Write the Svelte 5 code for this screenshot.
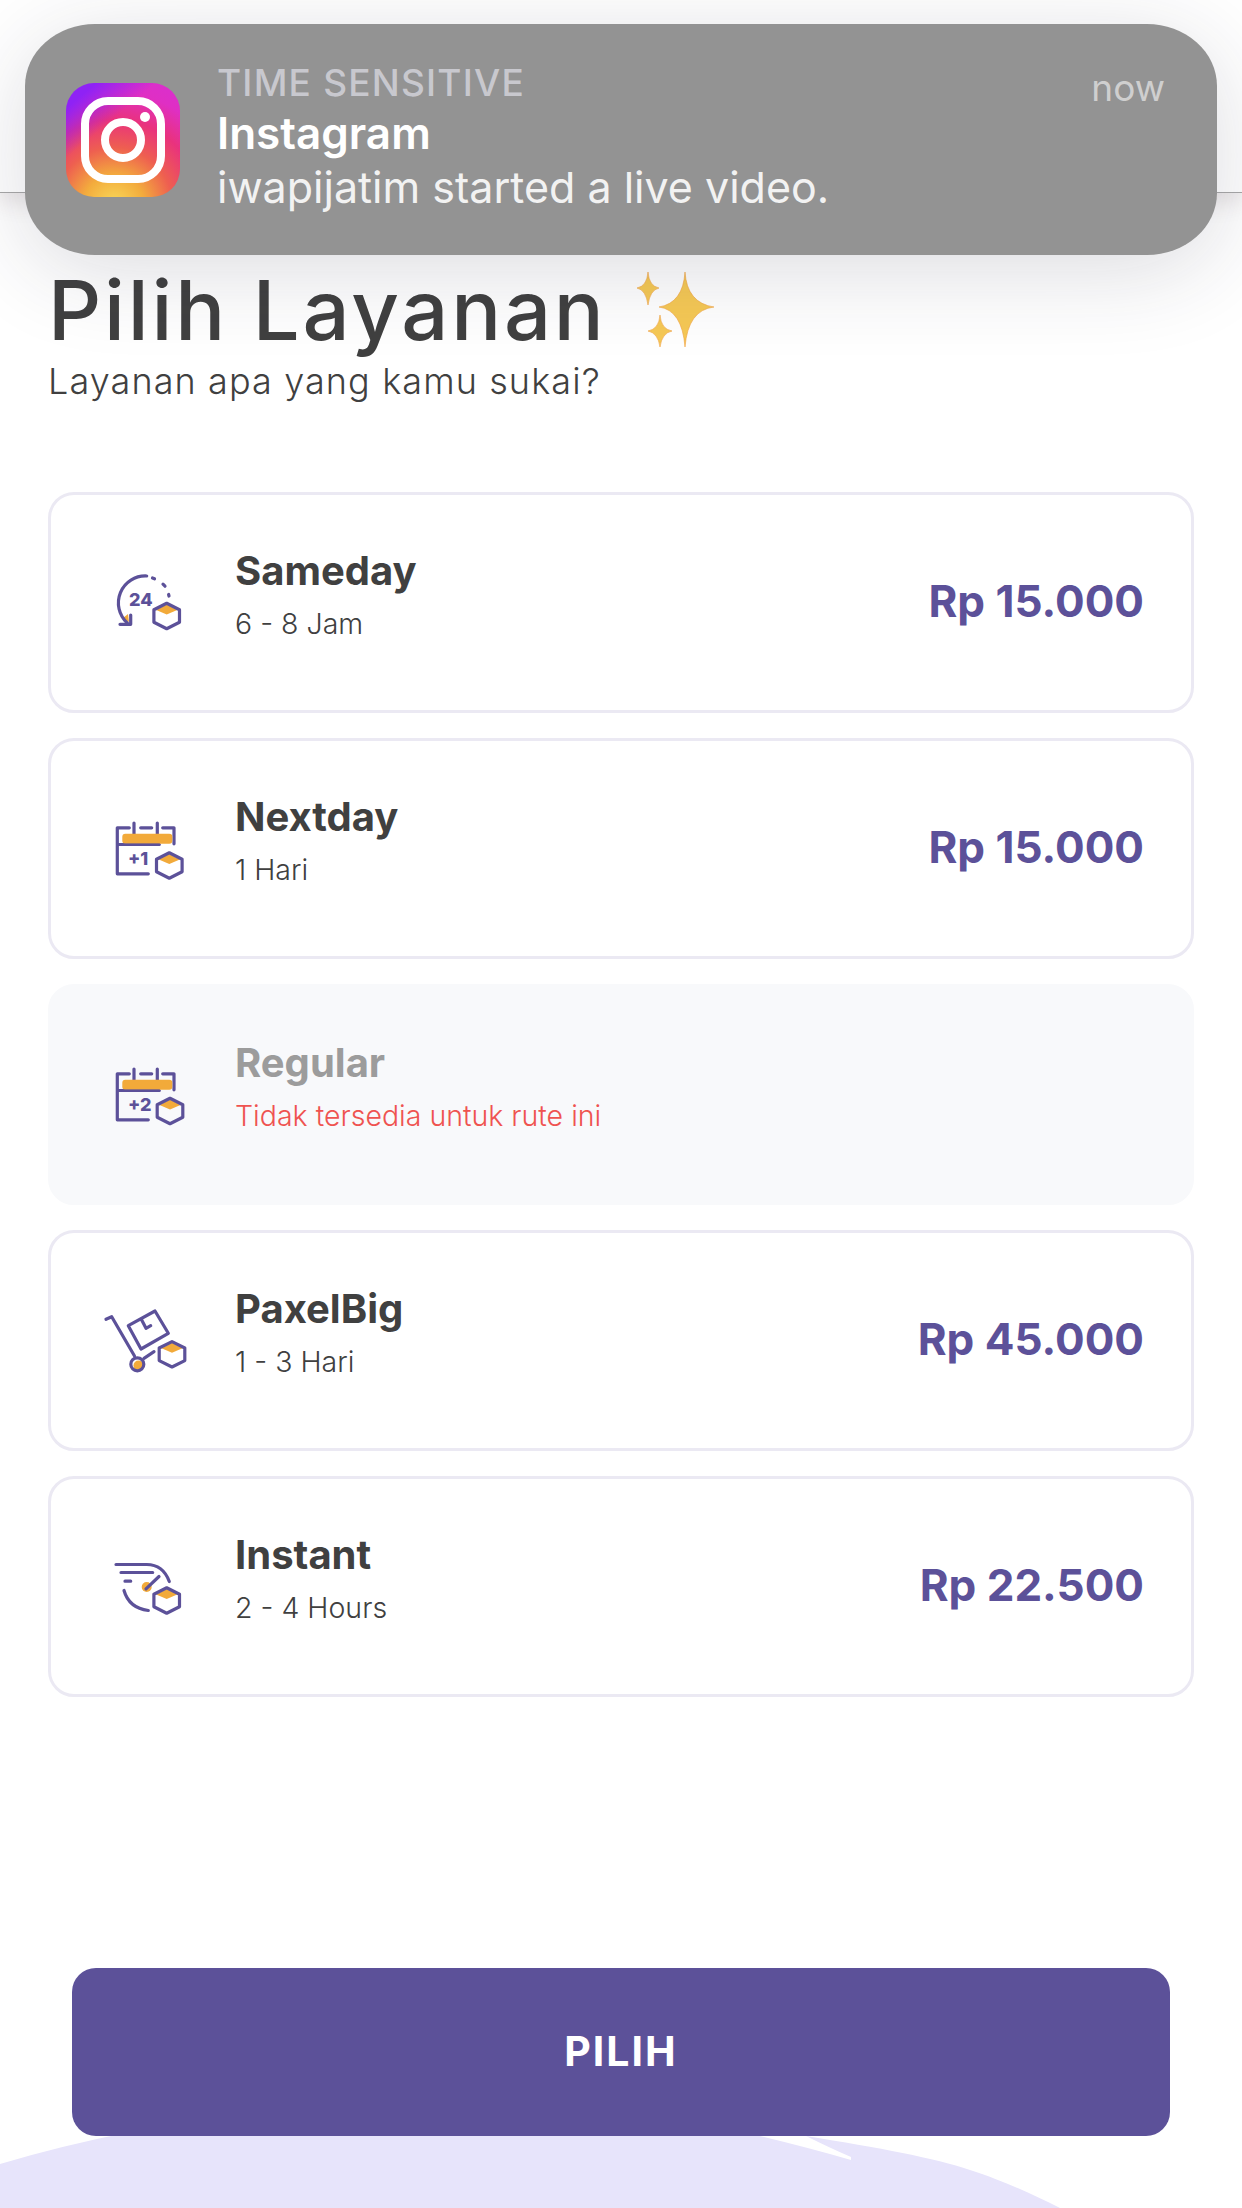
<script>
	const services = [
		{ name: 'Sameday', time: '6 - 8 Jam', price: 'Rp 15.000', icon: 'clock', box: [61.7, 58] },
		{ name: 'Nextday', time: '1 Hari', price: 'Rp 15.000', icon: 'calendar', plus: '+1', box: [64.3, 61.5] },
		{ name: 'Regular', time: 'Tidak tersedia untuk rute ini', icon: 'calendar', plus: '+2', box: [65, 61], off: true },
		{ name: 'PaxelBig', time: '1 - 3 Hari', price: 'Rp 45.000', icon: 'trolley', box: [67, 58.3] },
		{ name: 'Instant', time: '2 - 4 Hours', price: 'Rp 22.500', icon: 'speed', box: [61.7, 58.5] }
	];
	let selected = $state(null);
</script>

<div class="page">
	<svg class="blob" viewBox="0 0 1242 80" aria-hidden="true">
		<path d="M0 36 Q60 18 130 4 L760 4 L760 8 Q810 20 851 32 L851 29 Q830 20 806 8 C880 20 935 30 970 42 C1010 55 1035 68 1060 80 L0 80 Z" fill="#e7e4fb" />
	</svg>

	<div class="topbar"></div>

	<div class="notif">
		<svg class="ig" viewBox="0 0 114 114" aria-hidden="true">
			<rect x="19" y="18" width="76" height="78" rx="23" fill="none" stroke="#fff" stroke-width="8" />
			<circle cx="57" cy="57" r="18" fill="none" stroke="#fff" stroke-width="8" />
			<circle cx="79" cy="34" r="5" fill="#fff" />
		</svg>
		<div class="notif-text">
			<div class="tag">TIME SENSITIVE</div>
			<div class="app">Instagram</div>
			<div class="msg">iwapijatim started a live video.</div>
		</div>
		<div class="now">now</div>
	</div>

	<header>
		<h1>Pilih Layanan
			<svg class="sparkle" viewBox="0 0 78 76" aria-hidden="true">
				<g fill="#f6c955" stroke="#f2a23f" stroke-width="0.6">
					<path d="M48 0 Q50 31 77 35 Q51 38 48 75 Q45 38 22 35 Q46 31 48 0 Z" />
					<path d="M11 0 Q12 14 22 16 Q13 18 11 33 Q9 18 0 16 Q10 14 11 0 Z" />
					<path d="M23 43 Q24 57 35 59 Q25 61 23 75 Q21 61 11 59 Q22 57 23 43 Z" />
				</g>
			</svg>
		</h1>
		<p>Layanan apa yang kamu sukai?</p>
	</header>

	<div class="list">
		{#each services as s}
			<button class="card" class:off={s.off} class:picked={selected === s.name} disabled={s.off} onclick={() => (selected = s.name)}>
				<svg class="icon" viewBox="0 0 90 90" aria-hidden="true">
					<g fill="none" stroke="#5c5199" stroke-width="3.2" stroke-linecap="round" stroke-linejoin="round">
						{#if s.icon === 'clock'}
							<path d="M23 56 L18 60 L24 64 Z" fill="#f2aa3a" stroke="none" />
							<path d="M41.7 18 A27 27 0 0 0 22.3 65" />
							<path d="M15 66.3 H25.7 V57" />
							<path d="M47.5 20 L49.5 20.8 M58 26.2 L60 28.2 M63.6 36.5 L64 38" />
							<text x="24" y="47.5" class="num">24</text>
						{:else if s.icon === 'calendar'}
							<path d="M54.3 40.5 H12.3 V23.8 H24.3 M35.7 23.8 H46.7 M57.7 23.8 H69 V39.8 M29 19 V30 M52.3 19 V30 M12.3 40.5 V69.8 H43.3" />
							<rect x="17.3" y="29.8" width="50" height="10" rx="3" fill="#f2aa3a" stroke="none" />
							<path d="M17 40.5 H54.3" stroke-width="2" />
							<text x="23" y="60.5" class="num">{s.plus}</text>
						{:else if s.icon === 'trolley'}
							<circle cx="33.5" cy="69.5" r="5" fill="#f2aa3a" stroke="none" />
							<circle cx="32.3" cy="68.3" r="6.5" />
							<path d="M1 23.3 L6.7 20.7 L29.5 60 M39 62.3 L49 55.7" />
							<path d="M23.3 29.7 L50 15 L63.3 37.3 L36 53 Z M36.7 24 L41 32.3 L45.7 29.7" />
						{:else}
							<circle cx="41.7" cy="45" r="5" fill="#f2aa3a" stroke="none" />
							<path d="M11 22.5 H41.7 Q58 22.5 64.3 39.5 M16 30.5 H47.7 M20 39.2 H25.7 M19 48.5 Q24 66 43.3 68.5 M41 46.8 L54 34.5" />
						{/if}
					</g>
					<g transform="translate({s.box[0]} {s.box[1]})">
						<path d="M0 -11.5 L10.5 -6 L0 -1.5 L-10.5 -6 Z" fill="#f2aa3a" />
						<path d="M0 -12.7 L12.8 -6.3 V6.3 L0 12.7 L-12.8 6.3 V-6.3 Z" fill="none" stroke="#5c5199" stroke-width="3.2" stroke-linejoin="round" />
					</g>
				</svg>
				<span class="info">
					<span class="name">{s.name}</span>
					<span class="time">{s.time}</span>
				</span>
				{#if s.price}<span class="price">{s.price}</span>{/if}
			</button>
		{/each}
	</div>

	<button class="pick">PILIH</button>
</div>

<style>
	:global(body) {
		margin: 0;
		background: #fff;
	}

	.page {
		position: relative;
		display: flex;
		flex-direction: column;
		height: 2208px;
		overflow: hidden;
		font-family: Inter, "Liberation Sans", sans-serif;
		color: #404040;
	}

	.blob {
		position: absolute;
		left: 0;
		bottom: 0;
		width: 1242px;
		height: 80px;
		overflow: visible;
	}

	.topbar {
		flex: none;
		height: 192px;
		border-bottom: 1px solid #a8a8a8;
		box-shadow: 0 8px 22px rgba(70, 40, 50, 0.14);
	}

	.notif {
		position: absolute;
		top: 24px;
		left: 25px;
		width: 1192px;
		height: 231px;
		box-sizing: border-box;
		padding: 32px 52px 0 41px;
		display: flex;
		align-items: flex-start;
		gap: 37px;
		background: #939393;
		border-radius: 70px / 62px;
		box-shadow: 0 16px 90px rgba(40, 40, 60, 0.16);
		z-index: 2;
	}

	.ig {
		flex: none;
		width: 114px;
		height: 114px;
		margin-top: 27px;
		border-radius: 28px;
		background:
			linear-gradient(140deg, #8f22f5 0, #8f22f5 12%, rgba(143, 34, 245, 0) 36%),
			radial-gradient(circle at 42% 108%, #f9dc5c 0, #f3ac3d 22%, #ee5f50 42%, #e9327d 62%, #df2fc4 82%, #d92fd0 100%);
	}

	.notif-text {
		flex: 1;
		line-height: 53px;
	}

	.tag {
		font-size: 37px;
		font-weight: 500;
		letter-spacing: 1.2px;
		color: #c8c8ce;
	}

	.app {
		margin-top: -2px;
		font-size: 44px;
		font-weight: 600;
		color: #fff;
	}

	.msg {
		margin-top: 1px;
		font-size: 43px;
		color: #f2f2f2;
	}

	.now {
		margin-top: 9px;
		font-size: 37px;
		color: #cfcfcf;
	}

	header {
		padding: 72px 48px 0;
	}

	h1 {
		display: flex;
		align-items: center;
		gap: 30px;
		margin: 0;
		font-size: 83px;
		font-weight: 550;
		letter-spacing: 2.8px;
		line-height: 90px;
		color: #404040;
	}

	.sparkle {
		width: 78px;
		height: 76px;
	}

	header p {
		margin: 4px 0 0;
		font-size: 36px;
		font-weight: 300;
		letter-spacing: 1.1px;
		line-height: 44px;
		color: #404040;
	}

	.list {
		display: flex;
		flex-direction: column;
		gap: 25px;
		padding: 0 48px;
		margin-top: 89px;
	}

	.card {
		display: flex;
		align-items: center;
		height: 221px;
		box-sizing: border-box;
		padding: 0 47px 0 54px;
		background: #fff;
		border: 3px solid #ebe9f3;
		border-radius: 26px;
		font: inherit;
		color: inherit;
		text-align: left;
	}

	.card.off {
		background: #f8f9fb;
		border-color: #f8f9fb;
	}

	.icon {
		flex: none;
		width: 90px;
		height: 90px;
		margin-right: 40px;
		overflow: visible;
	}

	.num {
		font-family: Inter, sans-serif;
		font-size: 18px;
		font-weight: 800;
		fill: #5c5199;
		stroke: none;
	}

	.info {
		display: flex;
		flex-direction: column;
		flex: 1;
		gap: 12px;
		padding-bottom: 16px;
	}

	.name {
		font-size: 40px;
		font-weight: 700;
		line-height: 46px;
	}

	.off .name {
		color: #9c9c9c;
	}

	.time {
		font-size: 28.5px;
		font-weight: 300;
		line-height: 36px;
	}

	.off .time {
		color: #ef5350;
	}

	.price {
		padding-bottom: 3px;
		font-size: 44px;
		font-weight: 700;
		color: #5c5199;
	}

	.pick {
		position: relative;
		margin: auto 72px 72px;
		height: 168px;
		padding-bottom: 3px;
		border: 0;
		border-radius: 24px;
		background: #5c5199;
		color: #fff;
		font: inherit;
		font-size: 41px;
		font-weight: 700;
		letter-spacing: 2px;
	}
</style>
